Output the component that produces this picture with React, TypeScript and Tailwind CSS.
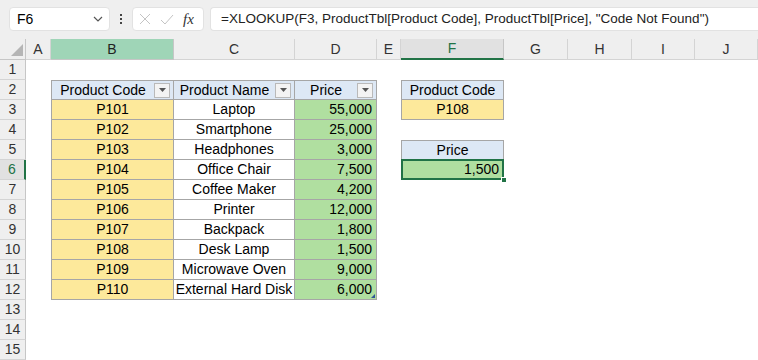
import React from "react";

const products = [
  ["P101", "Laptop", "55,000"],
  ["P102", "Smartphone", "25,000"],
  ["P103", "Headphones", "3,000"],
  ["P104", "Office Chair", "7,500"],
  ["P105", "Coffee Maker", "4,200"],
  ["P106", "Printer", "12,000"],
  ["P107", "Backpack", "1,800"],
  ["P108", "Desk Lamp", "1,500"],
  ["P109", "Microwave Oven", "9,000"],
  ["P110", "External Hard Disk", "6,000"],
];

const letters = ["A", "B", "C", "D", "E", "F", "G", "H", "I", "J"];

function FilterBtn() {
  return (
    <span className="w-[16px] h-[15px] shrink-0 border border-[#b9b9b9] bg-[#f3f3f3] flex items-center justify-center mr-[3px]">
      <svg width="7" height="4" viewBox="0 0 7 4">
        <path d="M0 0 L7 0 L3.5 4 Z" fill="#555" />
      </svg>
    </span>
  );
}

function Toolbar() {
  return (
    <div className="h-[39px] bg-[#efefef] flex items-center pl-[9px] pb-[1px]">
      <div className="w-[101px] h-[24px] bg-white rounded-[4px] border border-[#e2e2e2] flex items-center pl-[7px] pr-[6px]">
        <span className="flex-1">F6</span>
        <svg width="10" height="6" viewBox="0 0 10 6">
          <path d="M1 1 L5 5 L9 1" stroke="#555" strokeWidth="1.2" fill="none" />
        </svg>
      </div>
      <div className="w-[22px] flex flex-col items-center gap-[2px]">
        <span className="w-[2px] h-[2px] bg-[#444]" />
        <span className="w-[2px] h-[2px] bg-[#444]" />
        <span className="w-[2px] h-[2px] bg-[#444]" />
      </div>
      <div className="w-[72px] h-[24px] bg-white rounded-[4px] border border-[#e2e2e2] flex items-center pl-[6px] gap-[9px]">
        <svg width="12" height="12" viewBox="0 0 12 12">
          <path d="M1 1 L11 11 M11 1 L1 11" stroke="#c4c4c4" strokeWidth="1" />
        </svg>
        <svg width="14" height="11" viewBox="0 0 14 11">
          <path d="M1 6 L5 10 L13 1" stroke="#c4c4c4" strokeWidth="1" fill="none" />
        </svg>
        <span className="text-[15px] italic text-[#333] font-['Liberation_Serif',serif] leading-none">fx</span>
      </div>
      <div className="ml-[6px] flex-1 h-[24px] bg-white rounded-l-[4px] border border-r-0 border-[#e2e2e2] flex items-center pl-[10px] whitespace-nowrap overflow-hidden text-[13.5px] text-[#222]">
        =XLOOKUP(F3, ProductTbl[Product Code], ProductTbl[Price], "Code Not Found")
      </div>
    </div>
  );
}

export default function App() {
  const rows = Array.from({ length: 15 }, (_, i) => i + 1);
  return (
    <div className="w-[758px] h-[360px] overflow-hidden bg-white text-[14px] text-black font-['Liberation_Sans',Arial,sans-serif]">
      <Toolbar />
      <div className="grid grid-cols-[26px_25px_123px_121px_82px_24px_103px_64px_64px_63px_63px] grid-rows-[21px_repeat(15,20px)]">
        {/* corner */}
        <div className="bg-[#efefef] border-r border-b border-[#c6c6c6] flex items-end justify-end pr-[2px] pb-[3px]">
          <svg width="12" height="12" viewBox="0 0 12 12">
            <path d="M12 0 L12 12 L0 12 Z" fill="#b5b5b5" />
          </svg>
        </div>
        {letters.map((l) => (
          <div
            key={l}
            className={
              l === "B"
                ? "bg-[#9fd5b7] border-r border-b border-[#c6c6c6] flex items-center justify-center text-[#222]"
                : l === "F"
                ? "bg-[#e1e1e1] border-r border-b-2 border-r-[#c6c6c6] border-b-[#217346] flex items-center justify-center text-[#217346]"
                : "bg-[#efefef] border-r border-b border-[#d4d4d4] flex items-center justify-center text-[#333]"
            }
          >
            {l}
          </div>
        ))}

        {rows.map((r) => {
          const p = r >= 3 && r <= 12 ? products[r - 3] : null;
          return (
            <React.Fragment key={r}>
              <div
                className={
                  r === 6
                    ? "bg-[#e1e1e1] border-b border-b-[#d4d4d4] border-r-2 border-r-[#217346] flex items-center justify-center text-[#217346]"
                    : "bg-[#efefef] border-b border-r border-b-[#d4d4d4] border-r-[#c6c6c6] flex items-center justify-center text-[#333]"
                }
              >
                {r}
              </div>
              <div />
              {/* B */}
              {r === 2 ? (
                <div className="bg-[#dde8f5] border border-[#a6a6a6] flex items-center overflow-hidden">
                  <span className="flex-1 text-center whitespace-nowrap">Product Code</span>
                  <FilterBtn />
                </div>
              ) : p ? (
                <div className="bg-[#fde99b] border-l border-r border-b border-[#a6a6a6] flex items-center justify-center">
                  {p[0]}
                </div>
              ) : (
                <div />
              )}
              {/* C */}
              {r === 2 ? (
                <div className="bg-[#dde8f5] border-t border-r border-b border-[#a6a6a6] flex items-center overflow-hidden">
                  <span className="flex-1 text-center whitespace-nowrap">Product Name</span>
                  <FilterBtn />
                </div>
              ) : p ? (
                <div className="bg-white border-r border-b border-[#a6a6a6] flex items-center justify-center whitespace-nowrap">
                  {p[1]}
                </div>
              ) : (
                <div />
              )}
              {/* D */}
              {r === 2 ? (
                <div className="bg-[#dde8f5] border-t border-r border-b border-[#a6a6a6] flex items-center overflow-hidden">
                  <span className="flex-1 text-center whitespace-nowrap">Price</span>
                  <FilterBtn />
                </div>
              ) : p ? (
                <div className="relative bg-[#b0dfa0] border-r border-b border-[#a6a6a6] flex items-center justify-end pr-[4px]">
                  {p[2]}
                  {r === 12 && (
                    <svg className="absolute right-[1px] bottom-[1px]" width="4" height="4" viewBox="0 0 4 4">
                      <path d="M4 0 L4 4 L0 4 Z" fill="#2f5597" />
                    </svg>
                  )}
                </div>
              ) : (
                <div />
              )}
              <div />
              {/* F */}
              {r === 2 && (
                <div className="bg-[#dde8f5] border border-[#a6a6a6] flex items-center justify-center">Product Code</div>
              )}
              {r === 3 && (
                <div className="bg-[#fde99b] border-l border-r border-b border-[#a6a6a6] flex items-center justify-center">P108</div>
              )}
              {r === 5 && (
                <div className="bg-[#dde8f5] border border-[#a6a6a6] flex items-center justify-center">Price</div>
              )}
              {r === 6 && (
                <div className="relative bg-[#b0dfa0] border-l border-r border-b border-[#a6a6a6] flex items-center justify-end pr-[4px]">
                  1,500
                  <span className="absolute -left-[1px] -top-[1px] -right-[1px] -bottom-[1px] border-2 border-[#217346]" />
                  <span className="absolute -right-[4px] -bottom-[4px] w-[6px] h-[6px] bg-[#217346] border border-white" />
                </div>
              )}
              {r !== 2 && r !== 3 && r !== 5 && r !== 6 && <div />}
              <div />
              <div />
              <div />
              <div />
            </React.Fragment>
          );
        })}
      </div>
    </div>
  );
}
